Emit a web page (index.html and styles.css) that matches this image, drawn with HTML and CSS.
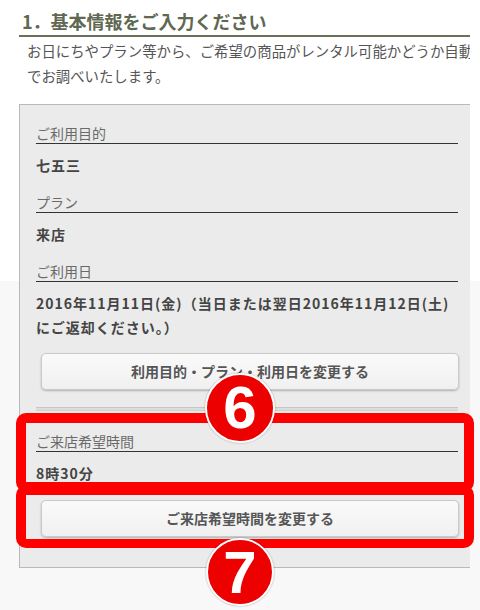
FILE: index.html
```html
<!DOCTYPE html>
<html lang="ja">
<head>
<meta charset="utf-8">
<title>基本情報</title>
<link rel="stylesheet" href="styles.css">
</head>
<body>
<div class="page">
  <div class="clip">
    <div class="inner">
      <h2 class="title">1．基本情報をご入力ください</h2>
      <p class="desc">お日にちやプラン等から、ご希望の商品がレンタル可能かどうか自動でお調べいたします。</p>
      <div class="box">
        <div class="field">
          <div class="label">ご利用目的</div>
          <div class="value">七五三</div>
        </div>
        <div class="field">
          <div class="label">プラン</div>
          <div class="value">来店</div>
        </div>
        <div class="field">
          <div class="label">ご利用日</div>
          <div class="value">2016年11月11日(金)（当日または翌日2016年11月12日(土)にご返却ください。）</div>
        </div>
        <div class="btn btn-first">利用目的・プラン・利用日を変更する</div>
        <div class="sep"></div>
        <div class="field field-time">
          <div class="label">ご来店希望時間</div>
          <div class="value">8時30分</div>
        </div>
        <div class="btn btn-second">ご来店希望時間を変更する</div>
      </div>
    </div>
  </div>
  <div class="mark mark-1"></div>
  <div class="mark mark-2"></div>
  <div class="badge badge-6">6</div>
  <div class="badge badge-7">7</div>
</div>
</body>
</html>
```
FILE: styles.css
```css
html, body {
  margin: 0;
  padding: 0;
}
body {
  width: 480px;
  height: 610px;
  overflow: hidden;
  background: linear-gradient(to bottom, #ffffff 0, #ffffff 281px, #f8f8f9 281px);
  font-family: "Noto Sans CJK JP", "Noto Sans", sans-serif;
}
.page {
  position: relative;
  width: 480px;
  height: 610px;
}
.clip {
  margin-left: 19px;
  width: 451px;
  overflow: hidden;
}
.inner {
  width: 465px;
}
.title {
  margin: 0;
  padding: 8px 0 0 3px;
  font-size: 18px;
  line-height: 27px;
  font-weight: bold;
  color: #5f6851;
  border-bottom: 2px solid #6c7259;
  width: 448px;
}
.desc {
  margin: 1px 0 16px;
  padding-left: 8px;
  font-size: 14.4px;
  line-height: 25px;
  color: #555;
}
.box {
  border: 1px solid #b9b9b9;
  background: #ebebeb;
  padding: 18px 25px 30px 16px;
}
.field + .field {
  margin-top: 15px;
}
.label {
  font-size: 14px;
  line-height: 20px;
  color: #6a6a6a;
  border-bottom: 1px solid #333;
}
.value {
  margin-top: 9px;
  font-size: 14px;
  line-height: 24px;
  font-weight: bold;
  letter-spacing: 1px;
  color: #444;
}
.btn {
  margin: 0 -1px 0 5px;
  height: 35px;
  line-height: 35px;
  text-align: center;
  font-size: 14px;
  font-weight: bold;
  color: #555;
  background: linear-gradient(to bottom, #fafafa, #f0f0f0);
  border: 1px solid #cacaca;
  border-radius: 5px;
  box-shadow: 0 1px 2px rgba(0, 0, 0, 0.25);
}
.btn-first {
  margin-top: 14px;
}
.btn-second {
  margin-top: 15px;
}
.sep {
  margin-top: 17px;
  height: 2px;
  background: #dedede;
  border-top: 1px solid #c6c6c6;
  border-bottom: 1px solid #cfcfcf;
}
.field-time {
  margin-top: 20px;
}
.mark {
  position: absolute;
  left: 16px;
  width: 438px;
  border: 10px solid #ff0000;
  border-radius: 10px;
}
.mark-1 {
  top: 413px;
  height: 59px;
}
.mark-2 {
  top: 485px;
  height: 44px;
  border-bottom-width: 9px;
}
.badge {
  position: absolute;
  box-sizing: border-box;
  border: 2px solid #fff;
  border-radius: 50%;
  background: #ec0000;
  color: #fff;
  text-align: center;
  font-family: "Liberation Sans", Arial, sans-serif;
  font-weight: bold;
  box-shadow: 0 0 2px rgba(0, 0, 0, 0.35);
}
.badge-6 {
  left: 205px;
  top: 373px;
  width: 70px;
  height: 70px;
  font-size: 60px;
  line-height: 66px;
}
.badge-7 {
  left: 206px;
  top: 538px;
  width: 68px;
  height: 68px;
  font-size: 60px;
  line-height: 66px;
}
```
